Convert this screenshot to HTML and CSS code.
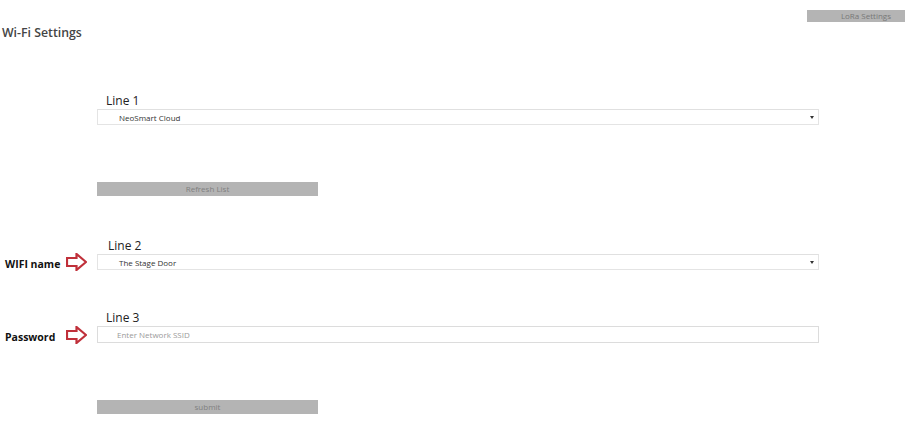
FILE: index.html
```html
<!DOCTYPE html>
<html>
<head>
<meta charset="utf-8">
<link rel="stylesheet" href="styles.css">
</head>
<body>
<header class="top">
  <h1 class="title">Wi-Fi Settings</h1>
  <button class="btn btn-lora">LoRa Settings</button>
</header>
<main class="form">
  <section class="field field-1">
    <div class="note"></div>
    <div class="control">
      <div class="label">Line 1</div>
      <div class="select"><span class="select-text">NeoSmart Cloud</span><span class="caret"></span></div>
    </div>
  </section>
  <div class="action action-refresh"><button class="btn btn-wide">Refresh List</button></div>
  <section class="field field-2">
    <div class="note"><span class="note-text">WIFI name</span>
      <svg class="arrow" width="21" height="18" viewBox="0 0 21 18"><polygon points="1,5 10.5,5 10.5,1 20,9 10.5,17 10.5,13 1,13" fill="#fff" stroke="#c0303a" stroke-width="2.2" stroke-linejoin="miter"/></svg>
    </div>
    <div class="control">
      <div class="label label-2">Line 2</div>
      <div class="select"><span class="select-text">The Stage Door</span><span class="caret"></span></div>
    </div>
  </section>
  <section class="field field-3">
    <div class="note"><span class="note-text">Password</span>
      <svg class="arrow" width="21" height="18" viewBox="0 0 21 18"><polygon points="1,5 10.5,5 10.5,1 20,9 10.5,17 10.5,13 1,13" fill="#fff" stroke="#c0303a" stroke-width="2.2" stroke-linejoin="miter"/></svg>
    </div>
    <div class="control">
      <div class="label">Line 3</div>
      <input class="input" type="text" placeholder="Enter Network SSID">
    </div>
  </section>
  <div class="action action-submit"><button class="btn btn-wide">submit</button></div>
</main>
</body>
</html>
```
FILE: styles.css
```css
* { box-sizing: border-box; }
html, body { margin: 0; padding: 0; background: #fff; }
body {
  width: 906px;
  height: 425px;
  overflow: hidden;
  font-family: "Open Sans", "Noto Sans", sans-serif;
  color: #222;
}
.top {
  display: flex;
  justify-content: space-between;
  align-items: flex-start;
  padding: 10px 1px 0 2px;
}
.title {
  margin: 15px 0 0 0;
  font-size: 12.3px;
  line-height: 16px;
  font-weight: 600;
  color: #444;
}
.btn {
  border: 0;
  margin: 0;
  padding: 0;
  background: #b4b4b4;
  color: #787878;
  font-family: "Open Sans", sans-serif;
  font-size: 8px;
  line-height: 14px;
  cursor: pointer;
}
.btn-lora {
  width: 98px;
  height: 12px;
  line-height: 12px;
  text-align: right;
  padding-right: 14px;
}
.form {
  display: flex;
  flex-direction: column;
  padding-right: 87px;
}
.field {
  display: grid;
  grid-template-columns: 97px 1fr;
  align-items: end;
}
.field-1 { margin-top: 52px; }
.field-2 { margin-top: 42px; }
.field-3 { margin-top: 40px; }
.note {
  display: flex;
  align-items: center;
  height: 16px;
  padding-left: 5px;
}
.note-text {
  font-size: 10.5px;
  font-weight: 700;
  color: #111;
  width: 61px;
  white-space: nowrap;
  margin-top: 3px;
}
.arrow { display: block; }
.control {
  display: flex;
  flex-direction: column;
}
.label {
  font-size: 12px;
  line-height: 16px;
  margin-left: 9px;
  color: #222;
}
.label-2 { margin-left: 11px; }
.select {
  height: 16px;
  border: 1px solid #e4e4e4;
  border-top-color: #e0e0e0;
  display: flex;
  align-items: center;
  justify-content: space-between;
  padding: 0 4px 0 21px;
  background: #fff;
}
.select-text {
  font-size: 8px;
  color: #333;
}
.caret {
  width: 0;
  height: 0;
  border-left: 2px solid transparent;
  border-right: 2px solid transparent;
  border-top: 3px solid #333;
}
.input {
  height: 17px;
  width: 722px;
  border: 1px solid #dcdcdc;
  padding: 0 0 0 19px;
  font-family: "Open Sans", sans-serif;
  font-size: 8px;
  color: #333;
  outline: none;
}
.input::placeholder { color: #9a9a9a; }
.action { display: flex; padding-left: 97px; }
.action-refresh { margin-top: 57px; }
.action-submit { margin-top: 57px; }
.btn-wide {
  width: 221px;
  height: 14px;
  line-height: 14px;
  color: #808080;
  text-align: center;
}
```
